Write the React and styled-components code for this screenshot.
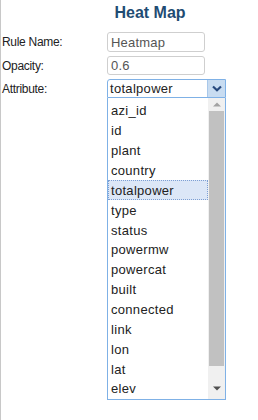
import React from "react";
import styled, { createGlobalStyle } from "styled-components";

const Global = createGlobalStyle`
  html, body { margin: 0; padding: 0; background: #fff; }
  body { font-family: "Liberation Sans", Arial, sans-serif; }
  * { box-sizing: border-box; }
`;

const Panel = styled.div`
  position: relative;
  width: 258px;
  height: 420px;
  border-left: 1px solid #c8c8c8;
  overflow: hidden;
`;

const Title = styled.h2`
  margin: 3px 0 0 0;
  padding-left: 41px;
  text-align: center;
  font: bold 16px/20px "Liberation Sans", Arial, sans-serif;
  color: #1f4c73;
`;

const Form = styled.div`
  display: grid;
  grid-template-columns: 105px 1fr;
  row-gap: 4px;
  margin-top: 9px;
  padding-left: 1px;
  align-items: center;
`;

const Label = styled.label`
  font-size: 12px;
  letter-spacing: -0.3px;
  color: #222;
`;

const TextInput = styled.div`
  width: 98px;
  height: ${(p) => p.$h || 20}px;
  border: 1px solid #cfcfcf;
  border-radius: 3px;
  padding: 0 3px;
  display: flex;
  align-items: center;
  font-size: 13px;
  letter-spacing: 0.2px;
  color: #555;
`;

const SelectWrap = styled.div`
  position: relative;
  width: 119px;
`;

const SelectBox = styled.div`
  height: 19px;
  border: 1px solid #7fb1e6;
  border-radius: 3px 0 0 0;
  display: flex;
  align-items: stretch;
  font-size: 13px;
  letter-spacing: 0.3px;
  color: #222;
`;

const SelectText = styled.div`
  flex: 1;
  padding-left: 2px;
  display: flex;
  align-items: center;
`;

const SelectButton = styled.div`
  width: 18px;
  background: #c8dcf1;
  border-left: 1px solid #a9c8ea;
  display: flex;
  align-items: center;
  justify-content: center;
`;

const List = styled.div`
  position: absolute;
  left: 0;
  top: 19px;
  width: 119px;
  height: 302px;
  border: 1px solid #7fb1e6;
  border-top: none;
  background: #fff;
  display: flex;
`;

const Items = styled.div`
  flex: 1;
  display: flex;
  flex-direction: column;
  padding-top: 3px;
`;

const Item = styled.div`
  height: 20px;
  display: flex;
  align-items: center;
  padding-left: 2px;
  font-size: 13px;
  letter-spacing: 0.3px;
  color: #222;
  background: ${(p) => (p.$active ? "#dce7f7" : "transparent")};
  border: 1px dotted ${(p) => (p.$active ? "#7d9fd3" : "transparent")};
`;

const Scrollbar = styled.div`
  width: 17px;
  background: #f0f0f0;
  display: flex;
  flex-direction: column;
  align-items: center;
`;

const ArrowCell = styled.div`
  height: 13px;
  width: 17px;
  display: flex;
  align-items: center;
  justify-content: center;
`;

const Thumb = styled.div`
  width: 15px;
  height: 255px;
  background: #c1c1c1;
`;

const Spacer = styled.div`
  flex: 1;
`;

const BottomGap = styled.div`
  height: 4px;
`;

const items = [
  "azi_id",
  "id",
  "plant",
  "country",
  "totalpower",
  "type",
  "status",
  "powermw",
  "powercat",
  "built",
  "connected",
  "link",
  "lon",
  "lat",
  "elev",
];

export default function App() {
  return (
    <>
      <Global />
      <Panel>
        <Title>Heat Map</Title>
        <Form>
          <Label>Rule Name:</Label>
          <TextInput>Heatmap</TextInput>
          <Label>Opacity:</Label>
          <TextInput $h={19}>0.6</TextInput>
          <Label>Attribute:</Label>
          <SelectWrap>
            <SelectBox>
              <SelectText>totalpower</SelectText>
              <SelectButton>
                <svg width="10" height="7" viewBox="0 0 10 7">
                  <path d="M1 1.5 L5 5.2 L9 1.5" fill="none" stroke="#27497e" strokeWidth="2.2" />
                </svg>
              </SelectButton>
            </SelectBox>
            <List>
              <Items>
                {items.map((it) => (
                  <Item key={it} $active={it === "totalpower"}>
                    {it}
                  </Item>
                ))}
              </Items>
              <Scrollbar>
                <ArrowCell>
                  <svg width="8" height="5" viewBox="0 0 8 5">
                    <path d="M0 4.5 L4 0.5 L8 4.5 Z" fill="#a3a3a3" />
                  </svg>
                </ArrowCell>
                <Thumb />
                <Spacer />
                <ArrowCell>
                  <svg width="8" height="5" viewBox="0 0 8 5">
                    <path d="M0 0.5 L8 0.5 L4 4.5 Z" fill="#505050" />
                  </svg>
                </ArrowCell>
                <BottomGap />
              </Scrollbar>
            </List>
          </SelectWrap>
        </Form>
      </Panel>
    </>
  );
}
